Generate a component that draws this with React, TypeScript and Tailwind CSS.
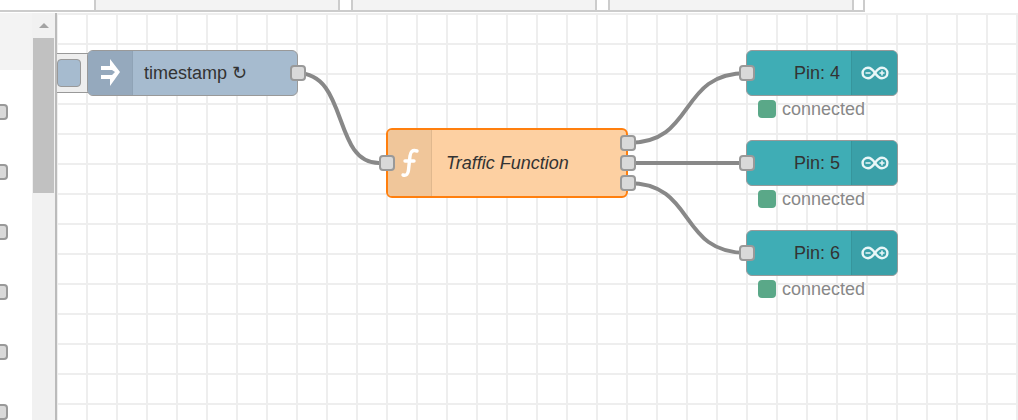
const FONT = "font-['Liberation_Sans',Arial,sans-serif]";

function Port({ className }: { className: string }) {
  return <div className={`absolute w-[16px] h-[16px] rounded-[4px] bg-[#d9d9d9] border-2 border-[#999] ${className}`} />;
}

function PinNode({ pin, top }: { pin: number; top: string }) {
  return (
    <div className={`absolute left-[689px] ${top} w-[152px]`}>
      <div className="relative flex h-[46px] rounded-[6px] border border-[#999] bg-[#3fadb5] overflow-visible">
        <div className="flex-1 flex items-center justify-end pr-[11px] text-[18px] text-[#333]">Pin: {pin}</div>
        <div className="w-[46px] rounded-r-[5px] bg-[#3aa0a8] border-l border-[#36959c] flex items-center justify-center">
          <svg width="28" height="14" viewBox="0 0 28 14" fill="none" stroke="#e8f6f7" strokeWidth="2.4">
            <path d="M14 7 C11 2.5 9 1.8 7 1.8 C4 1.8 1.6 4 1.6 7 C1.6 10 4 12.2 7 12.2 C9 12.2 11 11.5 14 7 C17 2.5 19 1.8 21 1.8 C24 1.8 26.4 4 26.4 7 C26.4 10 24 12.2 21 12.2 C19 12.2 17 11.5 14 7 Z" />
            <path d="M4.5 7 H9.5 M18.5 7 H23.5 M21 4.5 V9.5" strokeWidth="1.6" />
          </svg>
        </div>
        <Port className="left-[-8px] top-[14px]" />
      </div>
      <div className="flex items-center gap-[6px] pl-[12px] mt-[3px] h-[20px]">
        <div className="w-[18px] h-[18px] rounded-[4px] bg-[#5aa888]" />
        <span className="text-[18px] leading-[18px] text-[#888]">connected</span>
      </div>
    </div>
  );
}

export default function App() {
  const stubs = [0, 1, 2, 3, 4, 5];
  return (
    <div className={`${FONT} w-[1018px] h-[420px] overflow-hidden bg-white flex flex-col`}>
      <div className="flex h-[13px] shrink-0">
        <div className="flex h-[12px] w-[865px] border-b-2 border-r-2 border-[#ccc] pl-[94px] gap-[11px] box-content-none">
          <div className="w-[246px] bg-[#f3f3f3] border-x-2 border-[#ccc]" />
          <div className="w-[246px] bg-[#f3f3f3] border-x-2 border-[#ccc]" />
          <div className="w-[246px] bg-[#f3f3f3] border-x-2 border-[#ccc]" />
        </div>
      </div>
      <div className="flex flex-1 min-h-0">
        <div className="w-[57px] shrink-0 flex border-r-2 border-[#bbb]">
          <div className="w-[32px] flex flex-col">
            <div className="h-[57px] bg-[#f3f3f3]" />
            <div className="flex flex-col gap-[44px] pt-[34px]">
              {stubs.map((i) => (
                <div key={i} className="w-[8px] h-[16px] rounded-r-[4px] bg-[#d9d9d9] border-2 border-l-0 border-[#999]" />
              ))}
            </div>
          </div>
          <div className="flex-1 bg-[#f1f1f1] flex flex-col items-center">
            <div className="h-[25px] w-full flex items-center justify-center">
              <div className="w-0 h-0 border-x-[5px] border-x-transparent border-b-[5px] border-b-[#a3a3a3]" />
            </div>
            <div className="w-[21px] h-[155px] bg-[#c1c1c1]" />
          </div>
        </div>
        <div className="relative flex-1 bg-[linear-gradient(#eeeeee_2px,transparent_2px),linear-gradient(90deg,#eeeeee_2px,transparent_2px)] bg-[length:30px_30px] bg-[position:0px_0px,-1px_0px]">
          <svg className="absolute left-0 top-0" width="961" height="407" fill="none" stroke="#888" strokeWidth="4">
            <path d="M240 60 C292 60 275 150 322 150" />
            <path d="M571 130 C640 130 620 60 690 60" />
            <path d="M571 150 H690" />
            <path d="M571 170 C640 170 620 240 690 240" />
          </svg>

          {/* inject button */}
          <div className="absolute left-0 top-[40px] w-[32px] h-[40px] bg-[#eeeeee] border-y border-[#999] flex items-center">
            <div className="w-[24px] h-[28px] rounded-[4px] bg-[#a6bbcf] border border-[#999]" />
          </div>

          {/* timestamp */}
          <div className="absolute left-[30px] top-[37px] w-[211px] h-[46px] flex rounded-[6px] border border-[#999] bg-[#a6bbcf]">
            <div className="w-[45px] rounded-l-[5px] bg-[#95a9bd] border-r border-[#8fa3b6] flex items-center justify-center">
              <svg width="24" height="36" viewBox="0 0 24 36" fill="#fff">
                <path d="M3 11 H12 V4 L22 17 L12 31 V24 H3 V20 H14 L17 17 L14 15 H3 Z" />
              </svg>
            </div>
            <div className="flex-1 flex items-center pl-[11px] text-[18px] text-[#333] whitespace-nowrap">timestamp ↻</div>
            <Port className="right-[-9px] top-[14px]" />
          </div>

          {/* function */}
          <div className="absolute left-[329px] top-[115px] w-[242px] h-[70px] flex rounded-[6px] border-2 border-[#ff7f0e] bg-[#fdd0a2]">
            <div className="w-[44px] rounded-l-[4px] bg-[#f0c69a] border-r border-[#e0b88e] flex items-center justify-center">
              <svg width="20" height="30" viewBox="0 0 20 30" fill="none" stroke="#fff" strokeWidth="3.4" strokeLinecap="round">
                <path d="M17 3 C12 1.5 10.5 4 10 8 L8.5 22 C8 26 6.5 28 3 27" />
                <path d="M5 13 H14" />
              </svg>
            </div>
            <div className="flex-1 flex items-center pl-[14px] text-[18px] italic text-[#333] whitespace-nowrap">Traffic Function</div>
            <Port className="left-[-9px] top-[25px]" />
            <Port className="right-[-10px] top-[5px]" />
            <Port className="right-[-10px] top-[25px]" />
            <Port className="right-[-10px] top-[45px]" />
          </div>

          <PinNode pin={4} top="top-[37px]" />
          <PinNode pin={5} top="top-[127px]" />
          <PinNode pin={6} top="top-[217px]" />
        </div>
      </div>
    </div>
  );
}
